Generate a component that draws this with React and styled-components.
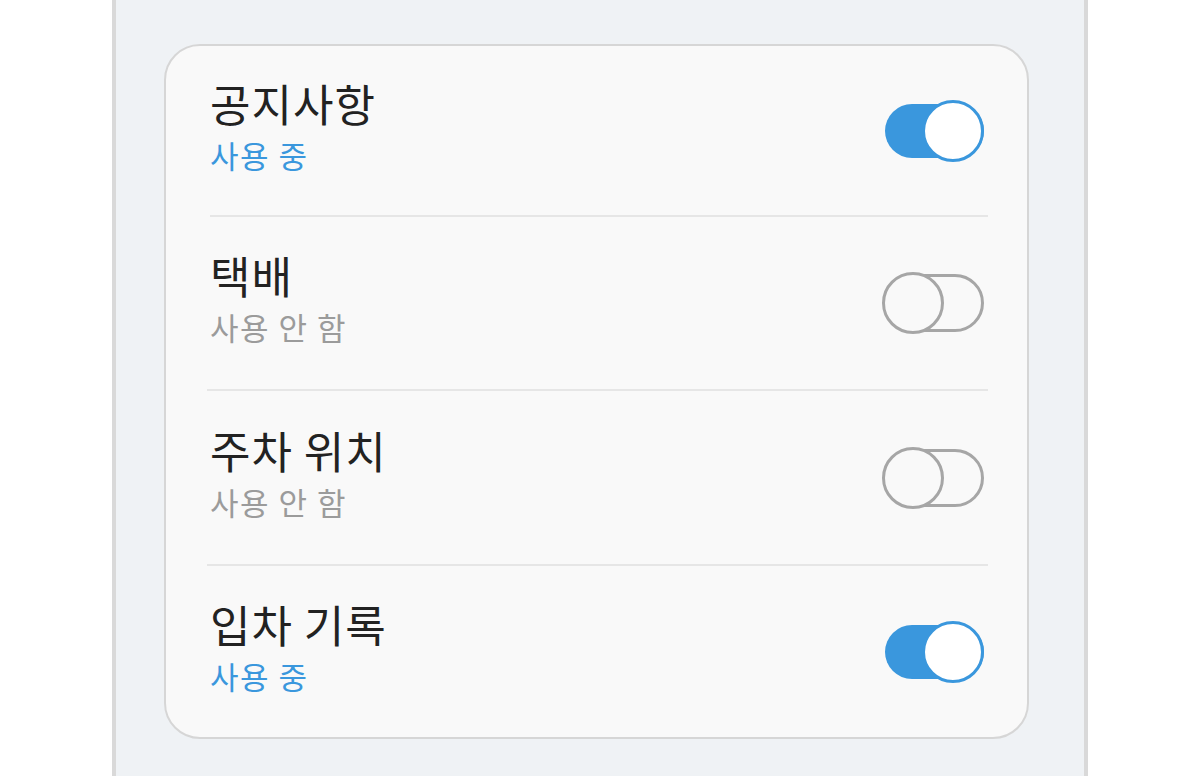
import styled, { createGlobalStyle, css } from 'styled-components';

const GlobalStyle = createGlobalStyle`
  html, body {
    margin: 0;
    padding: 0;
    background: #ffffff;
  }
  body {
    font-family: "Noto Sans CJK KR", "Noto Sans", sans-serif;
  }
`;

const Screen = styled.div`
  box-sizing: border-box;
  width: 976px;
  min-height: 776px;
  margin: 0 auto;
  padding: 44px 55px 36px 48px;
  background: #eff2f5;
  border-left: 4px solid #d9d9d9;
  border-right: 4px solid #d9d9d9;
`;

const Card = styled.div`
  background: #f9f9f9;
  border: 2px solid #d6d6d6;
  border-radius: 36px;
`;

const Row = styled.div`
  display: flex;
  align-items: center;
  justify-content: space-between;
  height: ${props => props.$height}px;
  padding: 0 43px 0 44px;
`;

const Divider = styled.div`
  height: 2px;
  margin: 0 39px 0 ${props => props.$inset}px;
  background: #e6e6e6;
`;

const Texts = styled.div`
  display: flex;
  flex-direction: column;
  gap: 8px;
  margin-top: -8px;
`;

const Title = styled.div`
  font-size: 44px;
  line-height: 48px;
  letter-spacing: 1px;
  color: #222222;
`;

const Status = styled.div`
  font-size: 31px;
  line-height: 40px;
  letter-spacing: 1.5px;
  color: ${props => (props.$on ? '#3a97dd' : '#9b9b9b')};
`;

const Toggle = styled.div`
  position: relative;
  width: 102px;
  height: 62px;
  flex-shrink: 0;
`;

const Track = styled.div`
  position: absolute;
  box-sizing: border-box;
  left: 3px;
  right: 0;
  border-radius: 30px;

  ${props =>
    props.$on
      ? css`
          top: 4px;
          height: 54px;
          background: #3a97dd;
        `
      : css`
          top: 2px;
          height: 58px;
          border: 3px solid #a6a6a6;
        `}
`;

const Thumb = styled.div`
  position: absolute;
  box-sizing: border-box;
  top: 0;
  width: 62px;
  height: 62px;
  border-radius: 50%;

  ${props =>
    props.$on
      ? css`
          right: 0;
          background: #ffffff;
          border: 3px solid #3a97dd;
        `
      : css`
          left: 0;
          background: #f9f9f9;
          border: 3px solid #a6a6a6;
        `}
`;

const items = [
  { title: '공지사항', on: true, height: 169, inset: 44 },
  { title: '택배', on: false, height: 172, inset: 44 },
  { title: '주차 위치', on: false, height: 173, inset: 41 },
  { title: '입차 기록', on: true, height: 171, inset: 41 },
];

function Switch({ on }) {
  return (
    <Toggle>
      <Track $on={on} />
      <Thumb $on={on} />
    </Toggle>
  );
}

export default function App() {
  return (
    <>
      <GlobalStyle />
      <Screen>
        <Card>
          {items.map((item, i) => (
            <div key={item.title}>
              {i > 0 && <Divider $inset={item.inset} />}
              <Row $height={item.height}>
                <Texts>
                  <Title>{item.title}</Title>
                  <Status $on={item.on}>{item.on ? '사용 중' : '사용 안 함'}</Status>
                </Texts>
                <Switch on={item.on} />
              </Row>
            </div>
          ))}
        </Card>
      </Screen>
    </>
  );
}
